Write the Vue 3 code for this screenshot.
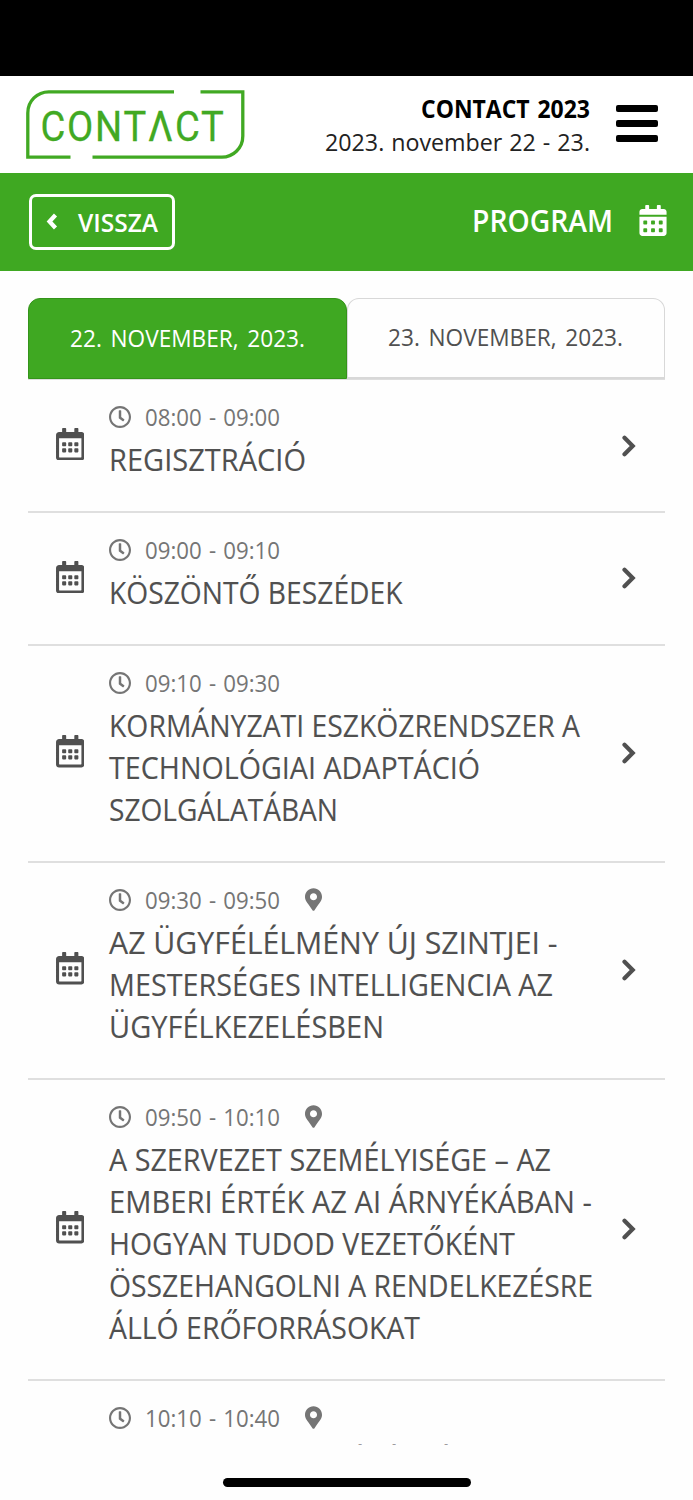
<script setup>
import { ref, h } from 'vue';

const icons = {
    calendar: {
        box: '0 0 448 512',
        path: 'M148 288h-40c-6.6 0-12-5.4-12-12v-40c0-6.6 5.4-12 12-12h40c6.6 0 12 5.4 12 12v40c0 6.6-5.4 12-12 12zm108-12v-40c0-6.6-5.4-12-12-12h-40c-6.6 0-12 5.4-12 12v40c0 6.6 5.4 12 12 12h40c6.6 0 12-5.4 12-12zm96 0v-40c0-6.6-5.4-12-12-12h-40c-6.6 0-12 5.4-12 12v40c0 6.6 5.4 12 12 12h40c6.6 0 12-5.4 12-12zm-96 96v-40c0-6.6-5.4-12-12-12h-40c-6.6 0-12 5.4-12 12v40c0 6.6 5.4 12 12 12h40c6.6 0 12-5.4 12-12zm-96 0v-40c0-6.6-5.4-12-12-12h-40c-6.6 0-12 5.4-12 12v40c0 6.6 5.4 12 12 12h40c6.6 0 12-5.4 12-12zm192 0v-40c0-6.6-5.4-12-12-12h-40c-6.6 0-12 5.4-12 12v40c0 6.6 5.4 12 12 12h40c6.6 0 12-5.4 12-12zm96-260v352c0 26.5-21.5 48-48 48H48c-26.5 0-48-21.5-48-48V112c0-26.5 21.5-48 48-48h48V12c0-6.6 5.4-12 12-12h40c6.6 0 12 5.4 12 12v52h128V12c0-6.6 5.4-12 12-12h40c6.6 0 12 5.4 12 12v52h48c26.5 0 48 21.5 48 48zm-48 346V160H48v298c0 3.3 2.7 6 6 6h340c3.3 0 6-2.7 6-6z'
    },
    calendarSolid: {
        box: '0 0 448 512',
        path: 'M0 464c0 26.5 21.5 48 48 48h352c26.5 0 48-21.5 48-48V192H0v272zm320-196c0-6.6 5.4-12 12-12h40c6.6 0 12 5.4 12 12v40c0 6.6-5.4 12-12 12h-40c-6.6 0-12-5.4-12-12v-40zm0 128c0-6.6 5.4-12 12-12h40c6.6 0 12 5.4 12 12v40c0 6.6-5.4 12-12 12h-40c-6.6 0-12-5.4-12-12v-40zM192 268c0-6.6 5.4-12 12-12h40c6.6 0 12 5.4 12 12v40c0 6.6-5.4 12-12 12h-40c-6.6 0-12-5.4-12-12v-40zm0 128c0-6.6 5.4-12 12-12h40c6.6 0 12 5.4 12 12v40c0 6.6-5.4 12-12 12h-40c-6.6 0-12-5.4-12-12v-40zM64 268c0-6.6 5.4-12 12-12h40c6.6 0 12 5.4 12 12v40c0 6.6-5.4 12-12 12H76c-6.6 0-12-5.4-12-12v-40zm0 128c0-6.6 5.4-12 12-12h40c6.6 0 12 5.4 12 12v40c0 6.6-5.4 12-12 12H76c-6.6 0-12-5.4-12-12v-40zM400 64h-48V16c0-8.8-7.2-16-16-16h-32c-8.8 0-16 7.2-16 16v48H160V16c0-8.8-7.2-16-16-16h-32c-8.8 0-16 7.2-16 16v48H48C21.5 64 0 85.5 0 112v48h448v-48c0-26.5-21.5-48-48-48z'
    },
    clock: {
        box: '8 8 496 496',
        path: 'M256 8C119 8 8 119 8 256s111 248 248 248 248-111 248-248S393 8 256 8zm0 448c-110.5 0-200-89.5-200-200S145.5 56 256 56s200 89.5 200 200-89.5 200-200 200zm61.8-104.4l-84.9-61.7c-3.1-2.3-4.9-5.9-4.9-9.7V116c0-6.6 5.4-12 12-12h32c6.6 0 12 5.4 12 12v141.7l66.8 48.6c5.4 3.9 6.5 11.4 2.6 16.8L334.6 349c-3.9 5.3-11.4 6.5-16.8 2.6z'
    },
    pin: {
        box: '0 0 384 512',
        path: 'M172.268 501.67C26.97 291.031 0 269.413 0 192 0 85.961 85.961 0 192 0s192 85.961 192 192c0 77.413-26.97 99.031-172.268 309.67-9.535 13.774-29.93 13.773-39.464 0zM192 272c44.183 0 80-35.817 80-80s-35.817-80-80-80-80 35.817-80 80 35.817 80 80 80z'
    }
};

const Icon = ({ name }) => h('svg', { viewBox: icons[name].box, fill: 'currentColor' }, [
    h('path', { d: icons[name].path })
]);
Icon.props = ['name'];

// one line of text set to a fixed measure
const FitText = ({ text, w, lh, base, x }) => h('svg', { width: w, height: lh, class: 'fit' }, [
    h('text', x
        ? { x, y: base, fill: 'currentColor' }
        : { x: 0, y: base, textLength: w, lengthAdjust: 'spacingAndGlyphs', fill: 'currentColor' }, text)
]);
FitText.props = ['text', 'w', 'lh', 'base', 'x'];

const activeDay = ref(0);

const days = ['22. NOVEMBER, 2023.', '23. NOVEMBER, 2023.'];

const program = [
    { time: '08:00 - 09:00', title: [['REGISZTRÁCIÓ', 197]] },
    { time: '09:00 - 09:10', title: [['KÖSZÖNTŐ BESZÉDEK', 293.5]] },
    {
        time: '09:10 - 09:30',
        title: [['KORMÁNYZATI ESZKÖZRENDSZER A', 471], ['TECHNOLÓGIAI ADAPTÁCIÓ', 371], ['SZOLGÁLATÁBAN', 229]]
    },
    {
        time: '09:30 - 09:50',
        place: true,
        title: [['AZ ÜGYFÉLÉLMÉNY ÚJ SZINTJEI -', 448.5], ['MESTERSÉGES INTELLIGENCIA AZ', 444], ['ÜGYFÉLKEZELÉSBEN', 275]]
    },
    {
        time: '09:50 - 10:10',
        place: true,
        title: [
            ['A SZERVEZET SZEMÉLYISÉGE – AZ', 442],
            ['EMBERI ÉRTÉK AZ AI ÁRNYÉKÁBAN -', 483],
            ['HOGYAN TUDOD VEZETŐKÉNT', 406],
            ['ÖSSZEHANGOLNI A RENDELKEZÉSRE', 484],
            ['ÁLLÓ ERŐFORRÁSOKAT', 311]
        ]
    },
    { time: '10:10 - 10:40', place: true, title: [['ÉÉÉ', 484, '239 273 325']] }
];
</script>

<template>
    <div class="screen">
        <div class="status-bar"></div>

        <header class="header">
            <svg class="logo" width="220" height="70" viewBox="0 0 220 70">
                <path d="M148 1.8H23A21 21 0 0 0 1.8 23V67.2H44.5M66.5 67.2H195A21 21 0 0 0 216.8 46V1.8H174.5" />
                <text x="14.5" y="50.5" textLength="185" lengthAdjust="spacingAndGlyphs">CONTΛCT</text>
            </svg>
            <div class="event">
                <FitText class="event-name" text="CONTACT 2023" :w="169" :lh="34" :base="26.5" />
                <FitText class="event-date" text="2023. november 22 - 23." :w="265" :lh="34" :base="26" />
            </div>
            <button class="menu"><span></span><span></span><span></span></button>
        </header>

        <nav class="title-bar">
            <button class="back">
                <svg width="12" height="17" viewBox="0 0 12 17"><path d="M9.5 2L3.5 8.5L9.5 15" /></svg>
                <FitText text="VISSZA" :w="80" :lh="36" :base="27.5" />
            </button>
            <div class="page-title">
                <FitText text="PROGRAM" :w="141" :lh="42" :base="31" />
                <Icon name="calendarSolid" />
            </div>
        </nav>

        <main class="content">
            <div class="tabs">
                <button v-for="(day, i) in days" :key="day" class="tab" :class="{ active: activeDay === i }" @click="activeDay = i">
                    <FitText :text="day" :w="235" :lh="36" :base="26.4" />
                </button>
            </div>

            <div class="list">
                <div v-for="item in program" :key="item.time" class="row">
                    <Icon class="row-icon" name="calendar" />
                    <div class="row-body">
                        <div class="time">
                            <Icon class="clock" name="clock" />
                            <FitText :text="item.time" :w="135" :lh="32" :base="24" />
                            <Icon v-if="item.place" class="pin" name="pin" />
                        </div>
                        <div class="title">
                            <FitText v-for="line in item.title" :key="line[0]" :text="line[0]" :w="line[1]" :x="line[2]" :lh="42.15" :base="32" />
                        </div>
                    </div>
                    <svg class="chevron" width="14" height="22" viewBox="0 0 14 22"><path d="M2.5 2.7L10.7 11L2.5 19.3" /></svg>
                </div>
            </div>
        </main>

        <footer class="home"><div class="home-bar"></div></footer>
    </div>
</template>

<style>
body {
    margin: 0;
    background: #fefefe;
}
</style>

<style scoped>
.screen {
    width: 693px;
    height: 1500px;
    display: flex;
    flex-direction: column;
    overflow: hidden;
    background: #fefefe;
    color: #505050;
    font-family: "Open Sans", "Noto Sans", sans-serif;
}

svg {
    display: block;
    flex-shrink: 0;
}

.fit,
.logo {
    overflow: visible;
}

button {
    padding: 0;
    border: 0;
    background: none;
    font: inherit;
    color: inherit;
    cursor: pointer;
}

.status-bar {
    height: 76.3px;
    flex-shrink: 0;
    background: #000;
}

.header {
    height: 97px;
    flex-shrink: 0;
    box-sizing: border-box;
    padding: 13.5px 35.5px 0 26px;
    display: flex;
    align-items: flex-start;
    background: #fff;
}

.logo path {
    fill: none;
    stroke: #41a923;
    stroke-width: 3.3;
}

.logo text {
    font-family: Roboto, sans-serif;
    font-size: 43px;
    letter-spacing: 2px;
    fill: #41a923;
    stroke: #41a923;
    stroke-width: 0.3;
}

.event {
    margin-left: auto;
    margin-right: 26px;
    padding-top: 1px;
    display: flex;
    flex-direction: column;
    align-items: flex-end;
    font-size: 24.5px;
    color: #222;
}

.event-name {
    font-weight: 700;
    word-spacing: 2px;
    color: #000;
}

.event-date {
    word-spacing: 1px;
}

.menu {
    width: 41.5px;
    margin-top: 15.5px;
    display: flex;
    flex-direction: column;
    gap: 7.8px;
}

.menu span {
    width: 100%;
    height: 7px;
    border-radius: 2px;
    background: #000;
}

.title-bar {
    height: 97.4px;
    flex-shrink: 0;
    box-sizing: border-box;
    padding: 0 26px 0 29px;
    display: flex;
    align-items: center;
    justify-content: space-between;
    background: #3fa822;
    color: #fff;
    font-weight: 600;
}

.back {
    width: 146px;
    height: 56px;
    box-sizing: border-box;
    padding: 0 14px 0 13.5px;
    display: flex;
    align-items: center;
    justify-content: space-between;
    border: 3px solid #fff;
    border-radius: 7px;
    font-size: 25.5px;
    font-weight: 600;
}

.back path {
    fill: none;
    stroke: #fff;
    stroke-width: 4.2;
}

.page-title {
    display: flex;
    align-items: center;
    gap: 26px;
    font-size: 30.6px;
}

.page-title svg:last-child {
    width: 28px;
    height: 31px;
    margin-top: -2px;
}

.content {
    height: 1174px;
    flex-shrink: 0;
    box-sizing: border-box;
    padding: 27.3px 28px 0;
    overflow: hidden;
}

.tabs {
    height: 82.3px;
    box-sizing: border-box;
    display: flex;
    border-bottom: 1px solid #dedede;
}

.tab {
    width: 50%;
    box-sizing: border-box;
    display: flex;
    align-items: center;
    justify-content: center;
    border: 1.5px solid #d8d8d8;
    border-bottom-width: 2px;
    border-radius: 12px 12px 0 0;
    font-size: 24.5px;
    word-spacing: 3px;
}

.tab.active {
    background: #3fa822;
    border-color: #34941a;
    border-bottom-width: 1.5px;
    color: #fff;
}

.row {
    display: flex;
    align-items: center;
    padding: 0 29.5px 0 27.5px;
    border-bottom: 2px solid #dfdfdf;
}

/* runs on below the fold, so its icons sit out of view */
.row:last-child {
    height: 300px;
}

.row:last-child .row-body {
    align-self: flex-start;
}

.row-icon {
    width: 28.5px;
    height: 32.5px;
    margin-top: -3px;
}

.row-body {
    flex: 1;
    padding: 22px 0 29.35px;
    margin-left: 25px;
}

.time {
    height: 32px;
    display: flex;
    align-items: center;
    font-size: 23px;
    word-spacing: 1.5px;
    color: #757575;
}

.clock {
    width: 22px;
    height: 22px;
    margin-top: -2px;
    margin-right: 14px;
}

.pin {
    width: 17px;
    height: 23px;
    margin-top: -2px;
    margin-left: 25px;
}

.title {
    padding-top: 5.2px;
    font-size: 30.6px;
}

.title :deep(text) {
    stroke: currentColor;
    stroke-width: 0.1px;
}

.chevron path {
    fill: none;
    stroke: #505050;
    stroke-width: 4.2;
    stroke-linecap: round;
}

.row:last-child .title {
    padding-top: 7.2px;
}

.home {
    flex: 1;
    display: flex;
    justify-content: center;
    align-items: flex-start;
}

.home-bar {
    width: 248px;
    height: 9px;
    margin-top: 33.5px;
    border-radius: 5px;
    background: #000;
}
</style>
